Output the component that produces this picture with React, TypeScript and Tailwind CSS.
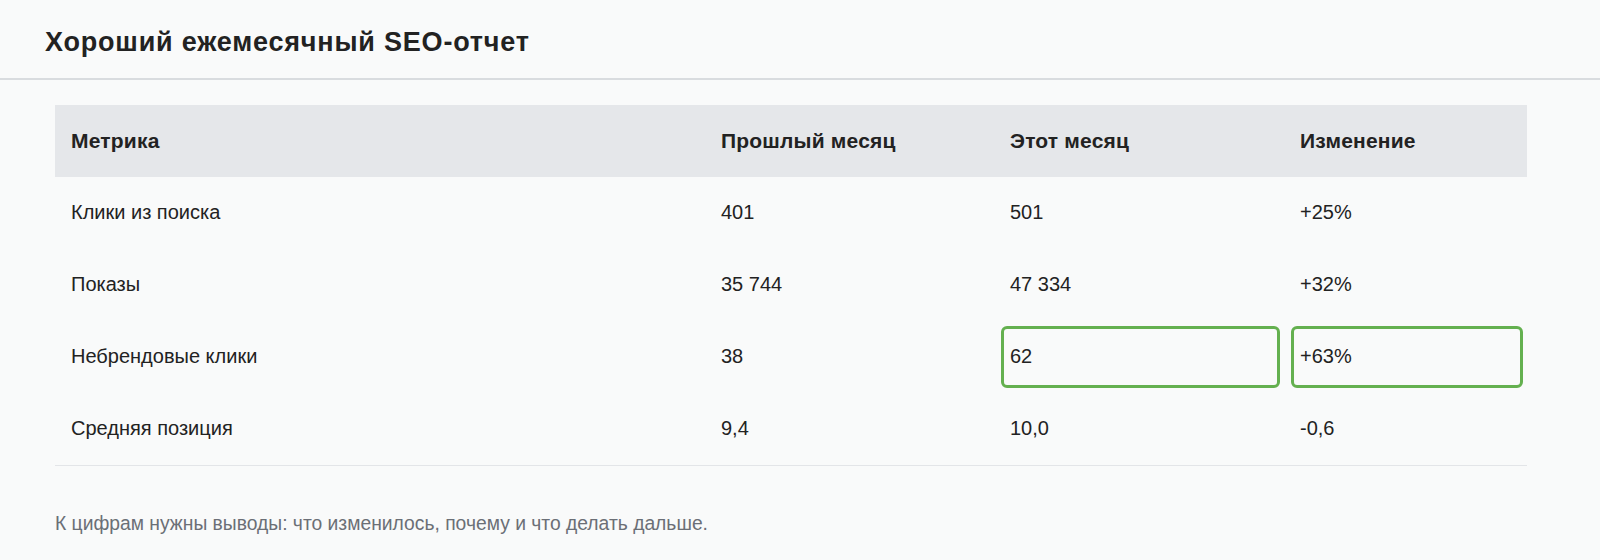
import React from "react";

const rows = [
  { name: "Клики из поиска", prev: "401", cur: "501", diff: "+25%" },
  { name: "Показы", prev: "35 744", cur: "47 334", diff: "+32%" },
  { name: "Небрендовые клики", prev: "38", cur: "62", diff: "+63%", hl: true },
  { name: "Средняя позиция", prev: "9,4", cur: "10,0", diff: "-0,6" },
];

const Box = () => (
  <span className="pointer-events-none absolute top-[5px] bottom-[5px] left-[7px] right-[4px] rounded-md border-[3px] border-[#64b04f]" />
);

const App = () => {
  return (
    <div className="h-[560px] w-[1600px] bg-[#f9fafa] font-['Liberation_Sans',Arial,sans-serif] text-[#222]">
      <header className="flex h-[80px] items-center border-b-2 border-[#d9dcdf] px-[45px] pt-[6px]">
        <h1 className="text-[27px] font-bold tracking-[0.8px] text-[#222]">Хороший ежемесячный SEO-отчет</h1>
      </header>

      <div className="ml-[55px] w-[1472px] pt-[25px]">
        <table className="w-full table-fixed border-collapse text-[20px]">
          <colgroup>
            <col className="w-[650px]" />
            <col className="w-[289px]" />
            <col className="w-[290px]" />
            <col className="w-[243px]" />
          </colgroup>
          <thead>
            <tr className="h-[72px] bg-[#e5e7ea] text-left text-[21px] tracking-[0.2px]">
              <th className="px-4 font-bold">Метрика</th>
              <th className="px-4 font-bold">Прошлый месяц</th>
              <th className="px-4 font-bold">Этот месяц</th>
              <th className="px-4 font-bold">Изменение</th>
            </tr>
          </thead>
          <tbody>
            {rows.map((r, i) => (
              <tr key={r.name} className={"h-[72px] " + (i === rows.length - 1 ? "border-b border-[#e3e5e8]" : "")}>
                <td className="px-4 pb-[2px]">{r.name}</td>
                <td className="px-4 pb-[2px]">{r.prev}</td>
                <td className="relative px-4 pb-[2px]">
                  {r.hl && <Box />}
                  {r.cur}
                </td>
                <td className="relative px-4 pb-[2px]">
                  {r.hl && <Box />}
                  {r.diff}
                </td>
              </tr>
            ))}
          </tbody>
        </table>

        <p className="mt-[44px] text-[19.3px] leading-[28px] text-[#6b6f76]">
          К цифрам нужны выводы: что изменилось, почему и что делать дальше.
        </p>
      </div>
    </div>
  );
};

export default App;
